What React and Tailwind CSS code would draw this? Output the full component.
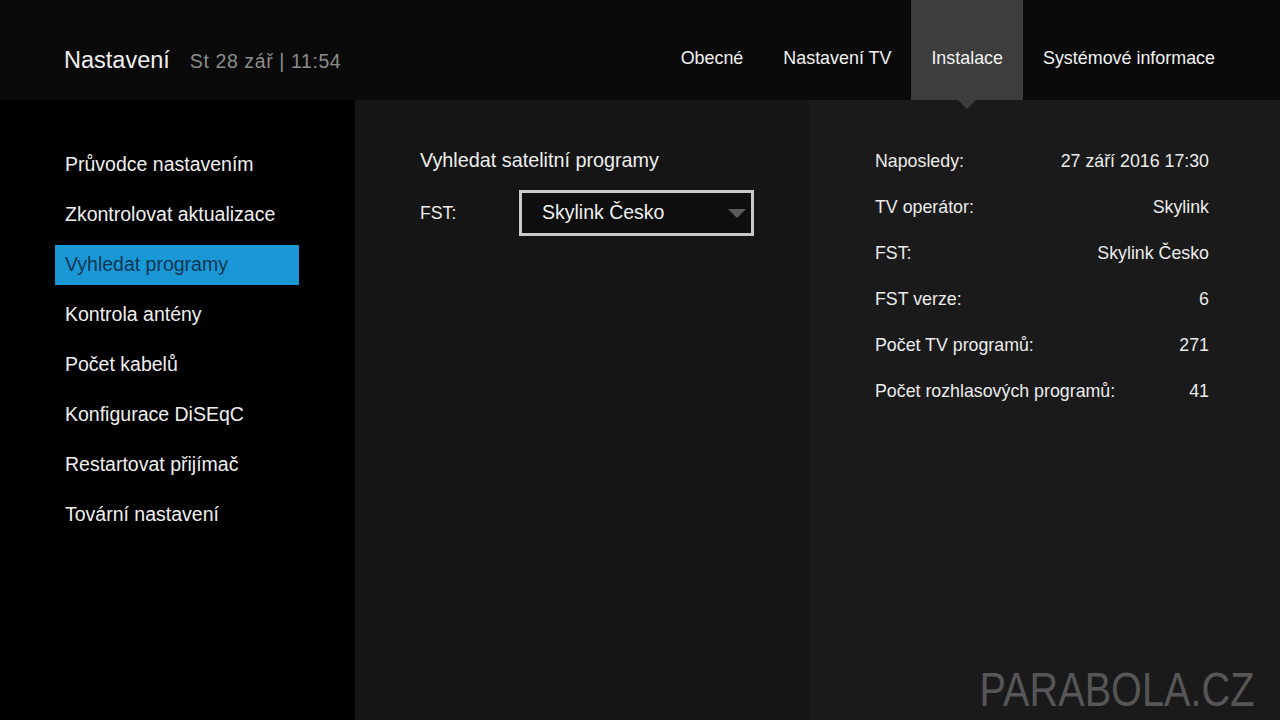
import React from 'react'
import clsx from 'clsx'

const tabs = ['Obecné', 'Nastavení TV', 'Instalace', 'Systémové informace']

const menu = [
  'Průvodce nastavením',
  'Zkontrolovat aktualizace',
  'Vyhledat programy',
  'Kontrola antény',
  'Počet kabelů',
  'Konfigurace DiSEqC',
  'Restartovat přijímač',
  'Tovární nastavení',
]

const info = [
  ['Naposledy:', '27 září 2016 17:30'],
  ['TV operátor:', 'Skylink'],
  ['FST:', 'Skylink Česko'],
  ['FST verze:', '6'],
  ['Počet TV programů:', '271'],
  ['Počet rozhlasových programů:', '41'],
]

export default function App() {
  return (
    <div className="w-[1280px] h-[720px] flex flex-col bg-black text-[#ececec] overflow-hidden font-['Liberation_Sans',Arial,sans-serif]">
      {/* header */}
      <div className="h-[100px] flex items-stretch bg-[#0a0a0a] shrink-0">
        <div className="flex items-center pl-[64px] pt-[22px]">
          <span className="text-[23.5px] text-[#f0f0f0]">Nastavení</span>
          <span className="ml-[20px] text-[19.5px] tracking-[0.6px] text-[#8c8c8c] pt-[2px]">St 28 zář | 11:54</span>
        </div>
        <div className="ml-auto mr-[45px] flex items-stretch">
          {tabs.map((t) => {
            const active = t === 'Instalace'
            return (
              <div
                key={t}
                className={clsx(
                  'relative px-[20px] flex items-center pt-[16px] text-[17.9px] text-[#f2f2f2]',
                  active && 'bg-[#3d3d3d]'
                )}
              >
                {t}
                {active && (
                  <div className="absolute left-1/2 -translate-x-1/2 top-full w-0 h-0 border-l-[9px] border-r-[9px] border-t-[9px] border-l-transparent border-r-transparent border-t-[#3d3d3d] z-10" />
                )}
              </div>
            )
          })}
        </div>
      </div>

      <div className="flex-1 flex">
        {/* sidebar */}
        <div className="w-[355px] bg-black pt-[45px] shrink-0">
          {menu.map((m) => {
            const active = m === 'Vyhledat programy'
            return (
              <div
                key={m}
                className={clsx(
                  'ml-[55px] w-[244px] h-[40px] mb-[10px] pl-[10px] flex items-center text-[19.5px]',
                  active ? 'bg-[#1a98d5] text-[#0b3654]' : 'text-[#efefef]'
                )}
              >
                {m}
              </div>
            )
          })}
        </div>

        {/* middle */}
        <div className="w-[454px] bg-[#151515] pl-[65px] pt-[48px] shrink-0">
          <div className="text-[19.8px] text-[#eeeeee] leading-[24px]">Vyhledat satelitní programy</div>
          <div className="flex items-center mt-[18px]">
            <div className="w-[99px] text-[17.7px] text-[#ececec]">FST:</div>
            <div className="w-[235px] h-[46px] border-[3px] border-[#c9c9c9] bg-[#0e0e0e] flex items-center pl-[20px] pr-[5px]">
              <span className="text-[19.5px] text-[#f0f0f0]">Skylink Česko</span>
              <div className="ml-auto w-0 h-0 border-l-[9px] border-r-[9px] border-t-[9px] border-l-transparent border-r-transparent border-t-[#5a5a5a]" />
            </div>
          </div>
        </div>

        {/* right info */}
        <div className="flex-1 bg-[#1a1a1a] flex flex-col">
          <div className="pl-[66px] pr-[71px] pt-[38px]">
            {info.map(([k, v]) => (
              <div key={k} className="h-[46px] flex items-center justify-between text-[17.8px] text-[#ececec]">
                <span>{k}</span>
                <span>{v}</span>
              </div>
            ))}
          </div>
          <div className="mt-auto flex justify-end pr-[26px] pb-[6px]">
            <span className="text-[49px] leading-[50px] text-[#565656] scale-x-[0.81] origin-right">PARABOLA.CZ</span>
          </div>
        </div>
      </div>
    </div>
  )
}
